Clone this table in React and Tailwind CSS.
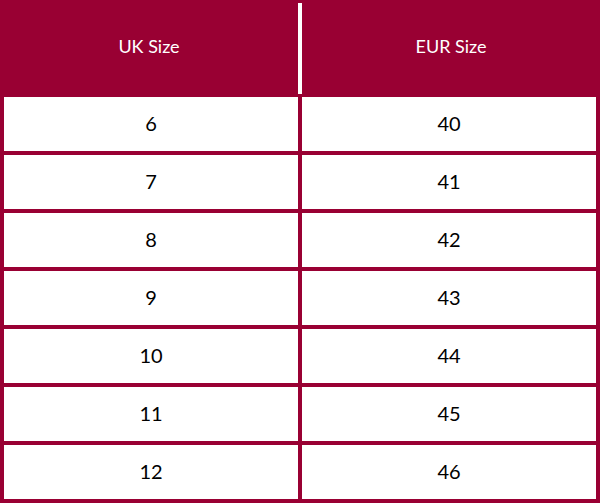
import { Fragment } from "react"

const rows = [
  ["6", "40"],
  ["7", "41"],
  ["8", "42"],
  ["9", "43"],
  ["10", "44"],
  ["11", "45"],
  ["12", "46"],
]

export default function App() {
  return (
    <div className="w-[600px] h-[503px] bg-[#990033] font-['Lato',sans-serif] overflow-hidden">
      <div className="flex h-[97px]">
        <div className="w-[298px] flex items-center justify-center pb-[5px] text-white text-[18px]">
          UK Size
        </div>
        <div className="w-[4px] bg-white mt-[3px] mb-[3px]" />
        <div className="w-[298px] flex items-center justify-center pb-[5px] text-white text-[18px]">
          EUR Size
        </div>
      </div>
      <div className="grid grid-cols-2 gap-[4px] px-[4px] pb-[4px]">
        {rows.map(([uk, eur]) => (
          <Fragment key={uk}>
            <div className="h-[54px] bg-white flex items-center justify-center pb-[2px] text-[20px] text-black">
              {uk}
            </div>
            <div className="h-[54px] bg-white flex items-center justify-center pb-[2px] text-[20px] text-black">
              {eur}
            </div>
          </Fragment>
        ))}
      </div>
    </div>
  )
}
